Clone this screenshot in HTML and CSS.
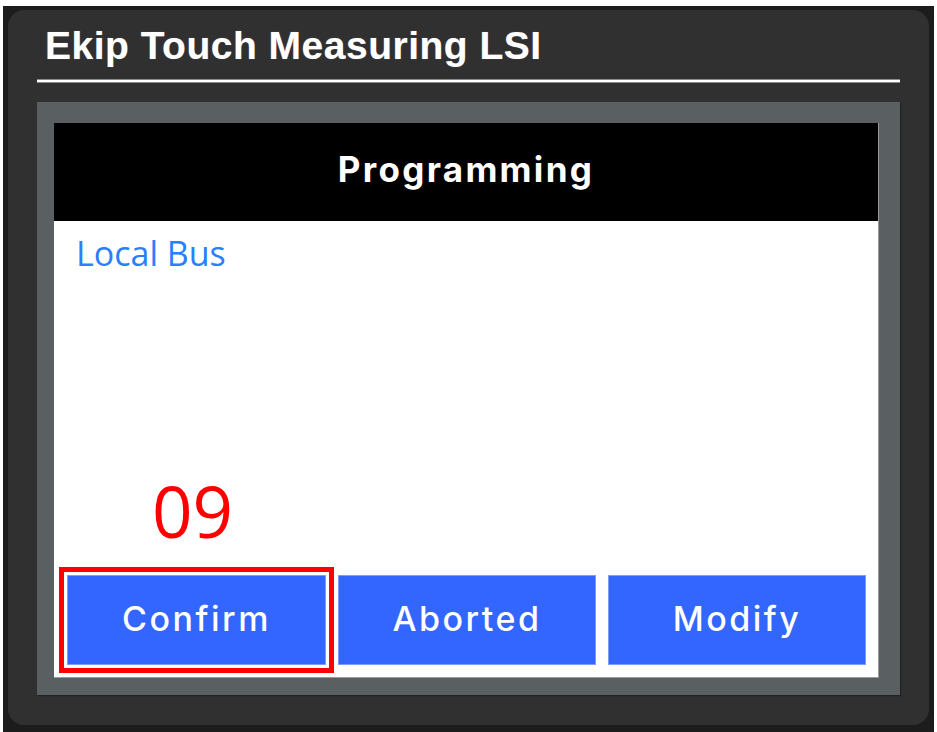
FILE: index.html
```html
<!DOCTYPE html>
<html lang="en">
<head>
    <meta charset="UTF-8">
    <meta name="viewport" content="width=device-width, initial-scale=1.0">
    <title>Ekip Touch Measuring LSI</title>
    <link rel="stylesheet" href="styles.css">
</head>
<body>
    <div class="device">
        <div class="panel">
            <h1 class="title">Ekip Touch Measuring LSI</h1>
            <div class="title-rule"></div>
            <div class="screen-frame">
                <div class="screen">
                    <div class="screen-header">Programming</div>
                    <div class="screen-body">
                        <div class="item">Local Bus</div>
                        <div class="actions">
                            <div class="action highlighted">
                                <span class="step">09</span>
                                <button class="btn">Confirm</button>
                            </div>
                            <div class="action">
                                <button class="btn">Aborted</button>
                            </div>
                            <div class="action">
                                <button class="btn">Modify</button>
                            </div>
                        </div>
                    </div>
                </div>
            </div>
        </div>
    </div>
</body>
</html>
```

FILE: styles.css
```css
body {
    margin: 0;
    background-color: white;
    font-family: "Liberation Sans", Arial, sans-serif;
}
.device {
    margin: 6px 3px 0 3px;
    padding: 4px 5px 7px 5px;
    background-color: #1c1c1c;
}
.panel {
    background-color: #303030;
    border-radius: 16px;
    padding: 14px 29px 30px 29px;
}
.title {
    margin: 0;
    padding-left: 8px;
    font-size: 39px;
    line-height: 44px;
    font-weight: bold;
    color: white;
    letter-spacing: 0.5px;
    text-shadow: 0 0 1px #777;
}
.title-rule {
    margin-top: 11px;
    height: 2px;
    background-color: white;
    border-top: 1px solid #8a8a8a;
    border-bottom: 1px solid #8a8a8a;
}
.screen-frame {
    margin-top: 19px;
    background-color: #5a5f61;
    padding: 21px 21px 17px 17px;
    box-shadow: 1px 1px 1px #222;
}
.screen {
    background-color: white;
    border-right: 1px solid #999;
    border-bottom: 1px solid #999;
}
.screen-header {
    background-color: black;
    color: white;
    height: 98px;
    display: flex;
    align-items: center;
    justify-content: center;
    padding-bottom: 6px;
    box-sizing: border-box;
    font-family: Inter, sans-serif;
    font-weight: bold;
    font-size: 35px;
    letter-spacing: 2.3px;
}
.screen-body {
    height: 456px;
    display: flex;
    flex-direction: column;
    justify-content: space-between;
    padding: 0 13px 12px 13px;
    box-sizing: border-box;
}
.item {
    padding: 9px 0 0 9px;
    font-family: "Open Sans", sans-serif;
    font-size: 34px;
    color: #2a7fff;
}
.actions {
    display: grid;
    grid-template-columns: 259px 258px 258px;
    gap: 12px;
}
.action {
    position: relative;
}
.btn {
    width: 100%;
    height: 90px;
    background-color: #3366ff;
    border: 1px solid #7d9bff;
    color: white;
    font-family: Inter, sans-serif;
    font-weight: 500;
    font-size: 34px;
    letter-spacing: 2.5px;
    padding: 0 0 4px 0;
    cursor: pointer;
}
.highlighted .btn {
    outline: 5px solid #ff0000;
    outline-offset: 3px;
}
.step {
    position: absolute;
    left: 0;
    right: 0;
    bottom: 100%;
    margin-bottom: 29px;
    padding-right: 8px;
    text-align: center;
    font-family: "Open Sans", sans-serif;
    font-size: 71px;
    line-height: 1;
    color: #ff0000;
}
```
